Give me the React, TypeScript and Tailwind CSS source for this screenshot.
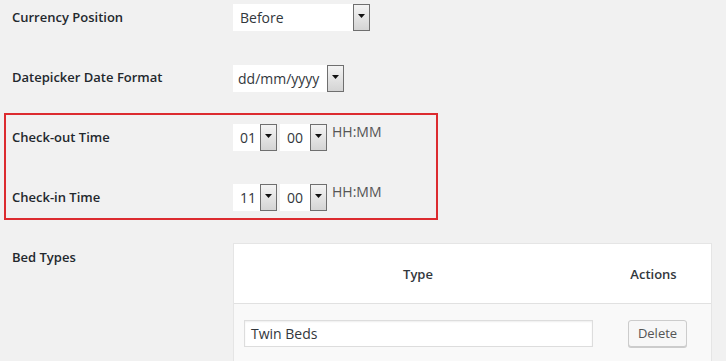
import React from "react";

function Arrow() {
  return (
    <div className="flex h-full w-[17px] shrink-0 items-center justify-center border border-[#6f6f6f] bg-gradient-to-b from-[#f4f4f4] to-[#d4d4d4] pb-[3px]">
      <svg width="7" height="4" viewBox="0 0 7 4">
        <polygon points="0,0 7,0 3.5,4" fill="#111" />
      </svg>
    </div>
  );
}

function Select({ value, width, pad = "pl-[7px]" }: { value: string; width: string; pad?: string }) {
  return (
    <div className={`flex h-[27px] items-stretch bg-white ${width}`}>
      <div className={`flex flex-1 items-center text-[14px] text-[#32373c] ${pad}`}>{value}</div>
      <Arrow />
    </div>
  );
}

function Row({ label, children }: { label: string; children: React.ReactNode }) {
  return (
    <div className="flex h-[60px]">
      <div className="flex h-[34px] w-[233px] shrink-0 items-center pl-[12px] pt-[2px] text-[13px] font-semibold text-[#23282d]">
        {label}
      </div>
      <div className="flex h-[34px] items-center">{children}</div>
    </div>
  );
}

function TimeRow({ label, hour }: { label: string; hour: string }) {
  return (
    <Row label={label}>
      <div className="flex items-start gap-[3px]">
        <Select value={hour} width="w-[44px]" />
        <Select value="00" width="w-[47px]" />
        <div className="ml-[2px] mt-[-3px] text-[14px] text-[#555]">HH:MM</div>
      </div>
    </Row>
  );
}

export default function App() {
  return (
    <div
      className="relative h-[361px] w-[726px] overflow-hidden bg-[#f1f1f1]"
      style={{ fontFamily: '"Open Sans", "Noto Sans", sans-serif' }}
    >
      <Row label="Currency Position">
        <Select value="Before" width="w-[137px]" />
      </Row>
      <Row label="Datepicker Date Format">
        <div className="mt-[2px]">
          <Select value="dd/mm/yyyy" width="w-[111px]" pad="pl-[5px]" />
        </div>
      </Row>
      <TimeRow label="Check-out Time" hour="01" />
      <TimeRow label="Check-in Time" hour="11" />
      <div className="flex">
        <div className="flex h-[34px] w-[233px] shrink-0 items-center pl-[12px] pt-[2px] text-[13px] font-semibold text-[#23282d]">
          Bed Types
        </div>
        <div className="mt-[3px] w-[479px] border border-[#e5e5e5] bg-white">
          <div className="flex h-[60px] items-center border-b border-[#e1e1e1] pt-[2px] text-[13px] font-semibold text-[#32373c]">
            <div className="flex-1 text-center">Type</div>
            <div className="w-[109px] pr-[6px] text-center">Actions</div>
          </div>
          <div className="flex h-[80px] items-start bg-[#f9f9f9] pt-[16px]">
            <div className="flex-1 pl-[10px] pr-[9px]">
              <div className="flex h-[27px] items-center border border-[#dddddd] bg-white pl-[6px] text-[14px] text-[#32373c] shadow-[inset_0_1px_2px_rgba(0,0,0,0.07)]">
                Twin Beds
              </div>
            </div>
            <div className="flex w-[109px] justify-start pl-[26px]">
              <div className="flex h-[27px] w-[59px] items-center justify-center rounded-[3px] border border-[#cccccc] bg-[#f7f7f7] text-[13px] text-[#555] shadow-[0_1px_0_#cccccc]">
                Delete
              </div>
            </div>
          </div>
        </div>
      </div>
      <div className="pointer-events-none absolute left-[4px] top-[113px] h-[107px] w-[434px] border-2 border-[#dc2b2f]" />
    </div>
  );
}
